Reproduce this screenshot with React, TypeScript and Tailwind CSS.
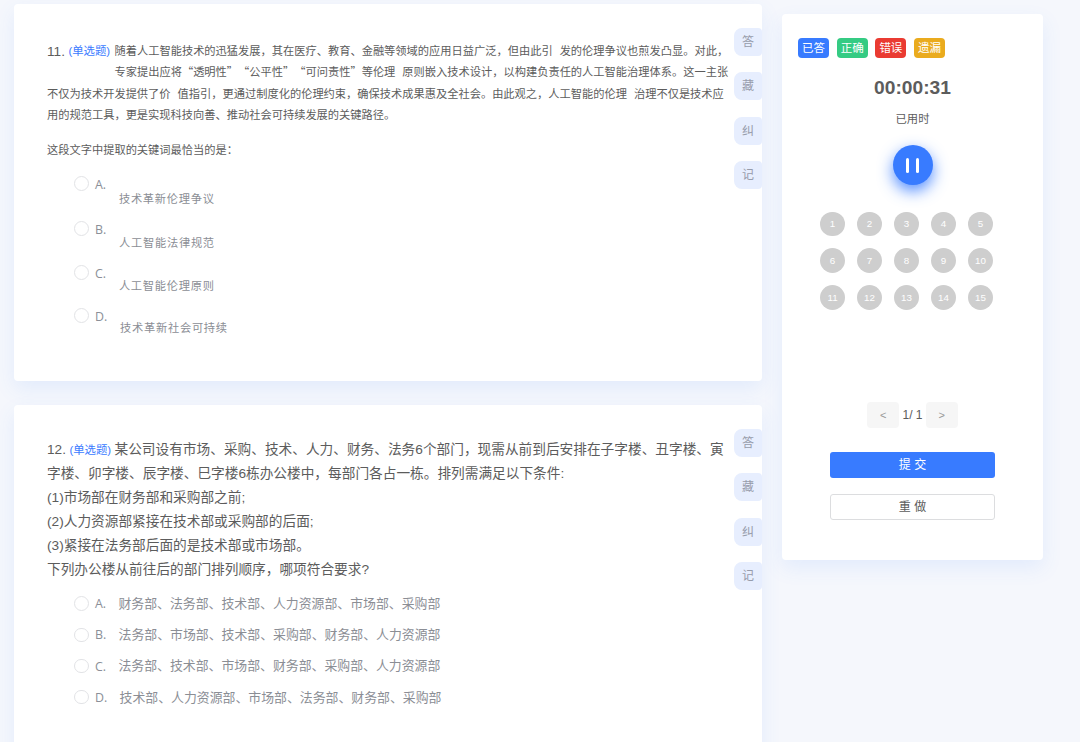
import { useState } from "react";
import clsx from "clsx";

const tools = ["答", "藏", "纠", "记"];

const firstOptions = [
  { key: "A", text: "技术革新伦理争议", height: "h-[45px]", offset: "pt-[14.5px]" },
  { key: "B", text: "人工智能法律规范", height: "h-11", offset: "pt-[14px]" },
  { key: "C", text: "人工智能伦理原则", height: "h-[43px]", offset: "pt-[12.5px]" },
  { key: "D", text: "技术革新社会可持续", height: "h-[43px]", offset: "pt-3" },
];

const secondOptions = [
  { key: "A", text: "财务部、法务部、技术部、人力资源部、市场部、采购部" },
  { key: "B", text: "法务部、市场部、技术部、采购部、财务部、人力资源部" },
  { key: "C", text: "法务部、技术部、市场部、财务部、采购部、人力资源部" },
  { key: "D", text: "技术部、人力资源部、市场部、法务部、财务部、采购部" },
];

const legend = [
  { label: "已答", color: "bg-[#387bff]" },
  { label: "正确", color: "bg-[#35cb83]" },
  { label: "错误", color: "bg-[#ea3b32]" },
  { label: "遗漏", color: "bg-[#eaab1e]" },
];

const cardShadow = "shadow-[0_8px_20px_rgba(70,135,255,0.1)]";

function Tools() {
  return (
    <div className="flex w-7 shrink-0 flex-col gap-[16.4px] pt-6">
      {tools.map((tool) => (
        <button key={tool} className="h-7 w-7 rounded-l-lg rounded-r-sm bg-[#e7eefe] text-xs text-[#979cab]">
          {tool}
        </button>
      ))}
    </div>
  );
}

function QuestionNo({ no }: { no: number }) {
  return (
    <span className="flex w-[67.5px] shrink-0 items-center gap-[3.5px]">
      <span className="text-[13.6px]">{no}.</span>
      <span className="text-[11.4px] text-[#3a7bff]">(单选题)</span>
    </span>
  );
}

function Radio({ checked, onClick }: { checked: boolean; onClick: () => void }) {
  return (
    <button
      onClick={onClick}
      className={clsx(
        "h-[14.5px] w-[14.5px] shrink-0 rounded-full border",
        checked ? "border-[#387bff] bg-[#387bff]" : "border-[#e2e3e6] bg-white"
      )}
    />
  );
}

function Gap() {
  return <span className="inline-block w-[7px]" />;
}

function App() {
  const [first, setFirst] = useState("");
  const [second, setSecond] = useState("");
  const [paused, setPaused] = useState(false);

  return (
    <div
      lang="zh-CN"
      className="flex h-[742px] w-[1080px] items-start gap-5 overflow-hidden bg-[#f5f7fc] pl-[14px] font-['Liberation_Sans','Noto_Sans_CJK_SC',sans-serif] text-[#5c5c5c] [text-spacing-trim:space-all]"
    >
      {/* questions */}
      <main className="flex w-[748px] shrink-0 flex-col gap-6 pt-1">
        <section className={clsx("flex h-[377px] justify-between rounded bg-white pl-[33px]", cardShadow)}>
          <div className="w-[685px] shrink-0 pt-9 whitespace-nowrap">
            <div className="font-['Noto_Sans_CJK_SC',sans-serif] text-[11.24px] leading-[21.3px]">
              <div className="flex h-[21.3px] items-center">
                <span className="flex pt-0.5 font-['Liberation_Sans','Noto_Sans_CJK_SC',sans-serif]">
                  <QuestionNo no={11} />
                </span>
                <span>随着人工智能技术的迅猛发展，其在医疗、教育、金融等领域的应用日益广泛，但由此引<Gap />发的伦理争议也煎发凸显。对此，</span>
              </div>
              <p className="h-[21.3px] pl-[67.5px]">专家提出应将“透明性”“公平性”“可问责性”等伦理<Gap />原则嵌入技术设计，以构建负责任的人工智能治理体系。这一主张</p>
              <p className="h-[21.3px]">不仅为技术开发提供了价<Gap />值指引，更通过制度化的伦理约束，确保技术成果惠及全社会。由此观之，人工智能的伦理<Gap />治理不仅是技术应</p>
              <p className="h-[21.3px]">用的规范工具，更是实现科技向善、推动社会可持续发展的关键路径。</p>
              <p className="mt-[14.3px] h-[21.3px]">这段文字中提取的关键词最恰当的是：</p>
            </div>
            <ul className="mt-[15.5px] pl-[27px]">
              {firstOptions.map((option) => (
                <li key={option.key} className={clsx("flex items-start", option.height)}>
                  <Radio checked={first === option.key} onClick={() => setFirst(option.key)} />
                  <span className="ml-[6.5px] pt-px font-['Open_Sans',sans-serif] text-[12.4px] leading-4 text-[#8b8f98]">{option.key}.</span>
                  <span className={clsx("ml-[12.8px] text-[11.25px] leading-4 tracking-[0.72px] text-[#8b8e95]", option.offset)}>{option.text}</span>
                </li>
              ))}
            </ul>
          </div>
          <Tools />
        </section>

        <section className={clsx("flex h-[360px] justify-between rounded bg-white pl-[33px]", cardShadow)}>
          <div className="w-[685px] shrink-0 pt-[33px] whitespace-nowrap">
            <div className="text-[13.68px] leading-6">
              <div className="flex h-6 items-center">
                <QuestionNo no={12} />
                <span>某公司设有市场、采购、技术、人力、财务、法务6个部门，现需从前到后安排在子字楼、丑字楼、寅</span>
              </div>
              <p className="h-6">字楼、卯字楼、辰字楼、巳字楼6栋办公楼中，每部门各占一栋。排列需满足以下条件:</p>
              <p className="h-6">(1)市场部在财务部和采购部之前;</p>
              <p className="h-6">(2)人力资源部紧接在技术部或采购部的后面;</p>
              <p className="h-6">(3)紧接在法务部后面的是技术部或市场部。</p>
              <p className="h-6">下列办公楼从前往后的部门排列顺序，哪项符合要求?</p>
            </div>
            <ul className="mt-1.5 pl-[27px]">
              {secondOptions.map((option) => (
                <li key={option.key} className="flex h-[31.2px] items-center">
                  <Radio checked={second === option.key} onClick={() => setSecond(option.key)} />
                  <span className="ml-[6.5px] pt-0.5 font-['Open_Sans',sans-serif] text-[12.4px] text-[#8b8f98]">{option.key}.</span>
                  <span className="ml-[12.3px] text-[12.88px] text-[#8b8e95]">{option.text}</span>
                </li>
              ))}
            </ul>
          </div>
          <Tools />
        </section>
      </main>

      {/* answer sheet */}
      <aside className={clsx("mt-[14px] flex h-[546px] w-[261px] shrink-0 flex-col items-center rounded bg-white pt-6", cardShadow)}>
        <div className="flex gap-[7.7px] self-start pl-4">
          {legend.map((item) => (
            <span key={item.label} className={clsx("flex h-5 w-[31px] items-center justify-center rounded pt-px text-[11.5px] text-white", item.color)}>
              {item.label}
            </span>
          ))}
        </div>
        <div className="mt-[18px] h-6 text-[19.2px] leading-6 font-bold">00:00:31</div>
        <div className="mt-[11px] h-4 text-[11.3px] leading-4">已用时</div>
        <button
          onClick={() => setPaused(!paused)}
          className="mt-[18px] flex h-10 w-10 shrink-0 items-center justify-center gap-[7px] rounded-full bg-[#387bff] shadow-[0_6px_15px_rgba(56,123,255,0.85)]"
        >
          <span className="h-[15px] w-[3px] rounded-sm bg-white" />
          <span className="h-[15px] w-[3px] rounded-sm bg-white" />
        </button>
        <div className="mt-[26.5px] grid w-[185px] -translate-x-1.5 grid-cols-5 gap-y-[12.7px]">
          {Array.from({ length: 15 }, (_, i) => (
            <span key={i} className="flex h-[24.3px] w-[24.3px] items-center justify-center justify-self-center rounded-full bg-[#cecece] pt-px text-[9.8px] text-white">
              {i + 1}
            </span>
          ))}
        </div>
        <div className="mt-[92.4px] flex h-[26px] items-center text-[12px]">
          <button className="h-[26px] w-8 rounded-sm bg-[#f6f6f6] text-[11px] text-[#999]">&lt;</button>
          <span className="w-[26.5px] text-center">1/ 1</span>
          <button className="h-[26px] w-8 rounded-sm bg-[#f6f6f6] text-[11px] text-[#999]">&gt;</button>
        </div>
        <button className="mt-6 h-[26px] w-[165px] shrink-0 rounded-[3px] bg-[#387bff] text-xs text-white">提 交</button>
        <button className="mt-4 h-[26px] w-[165px] shrink-0 rounded-[3px] border border-[#dcdddf] bg-white text-xs">重 做</button>
      </aside>
    </div>
  );
}

export default App;
